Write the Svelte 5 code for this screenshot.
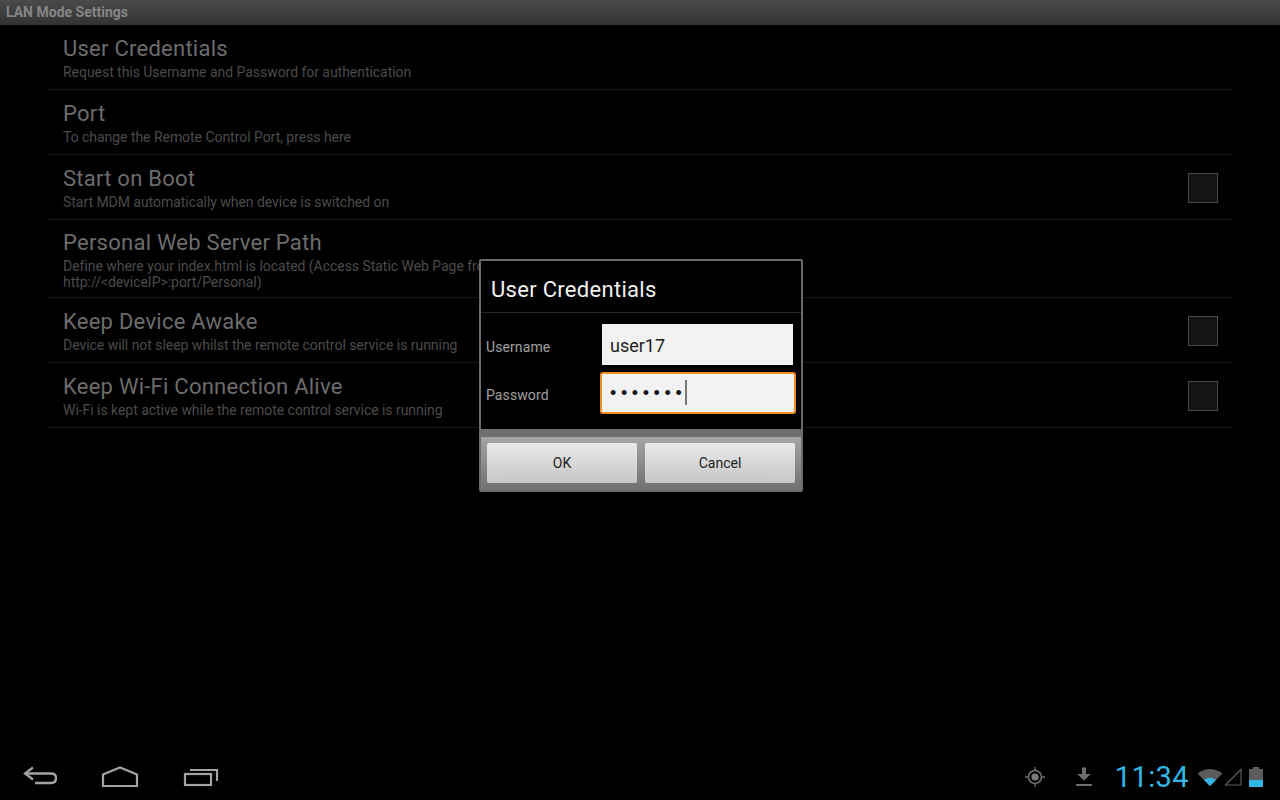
<script>
  const rows = [
    { t: 'User Credentials', s: ['Request this Username and Password for authentication'], c: false },
    { t: 'Port', s: ['To change the Remote Control Port, press here'], c: false },
    { t: 'Start on Boot', s: ['Start MDM automatically when device is switched on'], c: true },
    { t: 'Personal Web Server Path', s: ['Define where your index.html is located (Access Static Web Page from', 'http://<deviceIP>:port/Personal)'], c: false },
    { t: 'Keep Device Awake', s: ['Device will not sleep whilst the remote control service is running'], c: true },
    { t: 'Keep Wi-Fi Connection Alive', s: ['Wi-Fi is kept active while the remote control service is running'], c: true }
  ];
</script>

<div class="screen">
  <header class="titlebar">LAN Mode Settings</header>
  <main class="list">
    {#each rows as r}
      <div class="row" class:multi={r.s.length > 1}>
        <div class="text">
          <div class="title">{r.t}</div>
          {#each r.s as line}<div class="sub">{line}</div>{/each}
        </div>
        {#if r.c}<div class="check"></div>{/if}
      </div>
    {/each}
  </main>
  <footer class="nav">
    <div class="navbtns">
      <svg width="36" height="24" viewBox="0 0 36 24" fill="none" stroke="#a3a3a3" stroke-width="2.4">
        <path d="M11 2.5 L3 8.5 L11 14.5" stroke-width="2.2"/>
        <path d="M3.5 8.5 H29 Q34 8.5 34 13 Q34 18 29 18 H13" />
      </svg>
      <svg width="38" height="22" viewBox="0 0 38 22" fill="none" stroke="#a3a3a3" stroke-width="2.2">
        <path d="M2 20 V8.5 L19 1.5 L36 8.5 V20 Z"/>
      </svg>
      <svg class="recents" width="36" height="20" viewBox="0 0 36 20" fill="none" stroke="#a3a3a3" stroke-width="2.2">
        <rect x="2" y="7" width="26" height="11"/>
        <path d="M7 3 H34 V14"/>
      </svg>
    </div>
    <div class="status">
      <svg class="gps" width="22" height="22" viewBox="0 0 22 22" fill="none" stroke="#6e6e6e">
        <circle cx="11" cy="11" r="6.5" stroke-width="1.6"/>
        <circle cx="11" cy="11" r="3.6" fill="#7a7a7a" stroke="none"/>
        <path d="M11 1 V4.5 M11 17.5 V21 M1 11 H4.5 M17.5 11 H21" stroke-width="1.4"/>
      </svg>
      <svg class="dl" width="18" height="20" viewBox="0 0 18 20" fill="#6e6e6e">
        <path d="M7 0.5 H11 V7 H16 L9 13.5 L2 7 H7 Z"/>
        <rect x="1" y="17" width="16" height="2"/>
      </svg>
      <span class="clock">11:34</span>
      <svg class="wifi" width="26" height="18" viewBox="0 0 26 18">
        <path d="M0.5 5.5 Q13 -3.5 25.5 5.5 L13 18 Z" fill="#5c5c5c"/>
        <path d="M7 12 Q13 7.5 19 12 L13 18 Z" fill="#33b5e5"/>
      </svg>
      <svg class="signal" width="18" height="18" viewBox="0 0 18 18" fill="none" stroke="#5c5c5c" stroke-width="1.2">
        <path d="M17 1.5 V17 H1.5 Z"/>
      </svg>
      <svg class="battery" width="14" height="20" viewBox="0 0 14 20">
        <rect x="4" y="0" width="6" height="2" fill="#5c5c5c"/>
        <rect x="0" y="2" width="14" height="11" fill="#5c5c5c"/>
        <rect x="0" y="13" width="14" height="7" fill="#33b5e5"/>
      </svg>
    </div>
  </footer>

  <div class="dialog">
    <div class="dlg-title">User Credentials</div>
    <div class="form">
      <div class="field">
        <span class="label">Username</span>
        <div class="input">user17</div>
      </div>
      <div class="field second">
        <span class="label">Password</span>
        <div class="input focus"><span class="dots">•••••••</span><span class="caret"></span></div>
      </div>
    </div>
    <div class="buttons">
      <div class="btn">OK</div>
      <div class="btn">Cancel</div>
    </div>
  </div>
</div>

<style>
  :global(body) { margin: 0; background: #000; }
  .screen {
    position: relative;
    width: 1280px;
    height: 800px;
    background: #000;
    overflow: hidden;
    display: flex;
    flex-direction: column;
    font-family: Roboto, "Liberation Sans", sans-serif;
  }
  .titlebar {
    height: 25px;
    box-sizing: border-box;
    padding: 4px 0 0 6px;
    background: linear-gradient(#4a4a4a, #323232);
    color: #858585;
    font-size: 14px;
    line-height: 16px;
    font-weight: 700;
  }
  .list { flex: 1; margin: 0 48px; }
  .row {
    display: flex;
    align-items: center;
    justify-content: space-between;
    padding: 9px 14px 9px 15px;
    border-bottom: 1px solid #161616;
  }
  .row.multi { padding-top: 8px; padding-bottom: 7px; }
  .title { font-size: 22px; line-height: 29px; color: #6c6c6c; letter-spacing: 0.25px; }
  .sub { font-size: 14px; line-height: 16px; color: #4b4b4b; padding-top: 1px; letter-spacing: -0.04px; }
  .sub + .sub { padding-top: 0; }
  .check {
    width: 28px;
    height: 28px;
    border: 1px solid #4a4a4a;
    background: #141414;
    margin-top: 2px;
  }
  .nav {
    height: 48px;
    display: flex;
    align-items: center;
    justify-content: space-between;
  }
  .navbtns { display: flex; align-items: center; gap: 43px; padding: 2px 0 0 22px; }
  .recents { margin-left: 1px; }
  .status { display: flex; align-items: center; padding-right: 17px; padding-top: 2px; }
  .gps { margin-right: 29px; }
  .dl { margin-right: 22px; }
  .clock { font-size: 29px; line-height: 34px; color: #33b5e5; font-weight: 400; margin-right: 8px; letter-spacing: 0.4px; }
  .wifi { margin-right: 1px; }
  .signal { margin-right: 7px; }
  .battery { margin-top: -1px; }

  .dialog {
    position: absolute;
    left: 479px;
    top: 259px;
    width: 324px;
    height: 233px;
    box-sizing: border-box;
    border: 2px solid #6b6b6b;
    border-radius: 2px;
    background: #000;
    display: flex;
    flex-direction: column;
  }
  .dlg-title {
    height: 52px;
    box-sizing: border-box;
    padding: 16px 0 0 10px;
    color: #f2f2f2;
    font-size: 22px;
    line-height: 26px;
    letter-spacing: 0.3px;
    border-bottom: 1px solid #262626;
  }
  .form { flex: 1; padding: 11px 8px 0 5px; }
  .field { display: flex; align-items: center; justify-content: space-between; height: 41px; }
  .field.second { margin-top: 7px; }
  .label { color: #a0a0a0; font-size: 14px; padding-top: 4px; letter-spacing: 0.1px; }
  .input {
    width: 191px;
    height: 41px;
    box-sizing: border-box;
    background: #f2f2f2;
    color: #222;
    font-size: 18px;
    line-height: 43px;
    padding-left: 8px;
  }
  .input.focus {
    width: 196px;
    height: 42px;
    margin-right: -3px;
    border: 2px solid #ef8f23;
    border-radius: 3px;
    padding-left: 8px;
    display: flex;
    align-items: center;
    color: #111;
  }
  .dots { font-size: 18px; letter-spacing: 4.6px; line-height: 1; font-family: "Liberation Sans", sans-serif; }
  .caret { display: block; width: 2px; height: 25px; background: #777; margin-left: -1px; }
  .buttons {
    height: 61px;
    box-sizing: border-box;
    background: linear-gradient(#a5a5a5, #707070);
    border-top: 8px solid #6f6f6f;
    display: flex;
    gap: 8px;
    padding: 6px 6px 7px 6px;
  }
  .btn {
    flex: 1;
    background: linear-gradient(#e9e9e9, #c6c6c6);
    border-radius: 2px;
    color: #222;
    font-size: 14px;
    display: flex;
    align-items: center;
    justify-content: center;
  }
</style>
